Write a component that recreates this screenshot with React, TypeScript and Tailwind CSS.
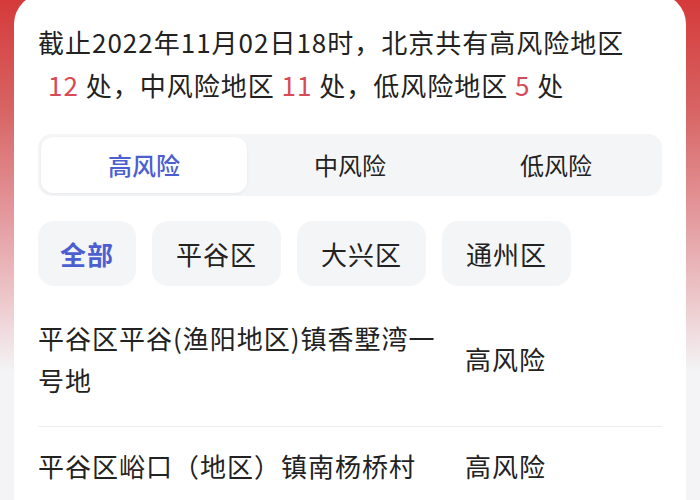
import { useState } from "react";

const TABS = ["高风险", "中风险", "低风险"];
const DISTRICTS = ["全部", "平谷区", "大兴区", "通州区"];

const AREAS = [
  { name: "平谷区平谷(渔阳地区)镇香墅湾一号地", level: "高风险" },
  { name: "平谷区峪口（地区）镇南杨桥村", level: "高风险" },
];

export default function App() {
  const [tab, setTab] = useState(0);
  const [district, setDistrict] = useState(0);

  return (
    <div
      className="h-[500px] w-[700px] overflow-hidden px-[14px] bg-[linear-gradient(180deg,#d53a3a_0px,#d86464_110px,#e3969a_210px,#edc8cb_300px,#f4f4f6_372px,#f4f4f6_500px)]"
      style={{ fontFamily: '"Noto Sans CJK SC", "Noto Sans", sans-serif' }}
    >
      <div className="-mt-[6px] min-h-[520px] rounded-t-[30px] bg-white px-[24px] pt-[26px] text-[#222]">
        <p className="text-[26px] leading-[43px] tracking-[1px]">
          截止2022年11月02日18时，北京共有高风险地区
          <br />
          <span className="pl-[10px] text-[#d84a55]">12</span> 处，中风险地区{" "}
          <span className="text-[#d84a55]">11</span> 处，低风险地区 <span className="text-[#d84a55]">5</span> 处
        </p>

        <div className="mt-[28px] grid grid-cols-3 rounded-[14px] bg-[#f4f5f7] p-[3px]">
          {TABS.map((t, i) => (
            <button
              key={t}
              type="button"
              onClick={() => setTab(i)}
              className={
                i === tab
                  ? "h-[56px] rounded-[12px] bg-white text-[24px] font-medium text-[#4b5fd0] shadow-[0_1px_3px_rgba(0,0,0,0.06)]"
                  : "h-[56px] rounded-[12px] text-[24px] text-[#222]"
              }
            >
              {t}
            </button>
          ))}
        </div>

        <div className="mt-[25px] flex gap-[16px]">
          {DISTRICTS.map((d, i) => (
            <button
              key={d}
              type="button"
              onClick={() => setDistrict(i)}
              className={
                i === district
                  ? "h-[65px] rounded-[16px] bg-[#f4f5f7] px-[22px] text-[26px] font-bold tracking-[1px] text-[#4b5fd0]"
                  : "h-[65px] rounded-[16px] bg-[#f4f5f7] px-[24px] text-[26px] tracking-[1px] text-[#222]"
              }
            >
              {d}
            </button>
          ))}
        </div>

        <div className="mt-[9px]">
          {AREAS.map((a, i) => (
            <div
              key={a.name}
              className={
                i > 0
                  ? "flex items-center border-t border-[#eeeeee] pt-[18px] pb-[22px]"
                  : "flex items-center pt-[22px] pb-[25px]"
              }
            >
              <div className="w-[412px] text-[26px] leading-[42px] tracking-[1px]">{a.name}</div>
              <div className="ml-[15px] text-[26px] leading-[42px] tracking-[1px]">{a.level}</div>
            </div>
          ))}
        </div>
      </div>
    </div>
  );
}
